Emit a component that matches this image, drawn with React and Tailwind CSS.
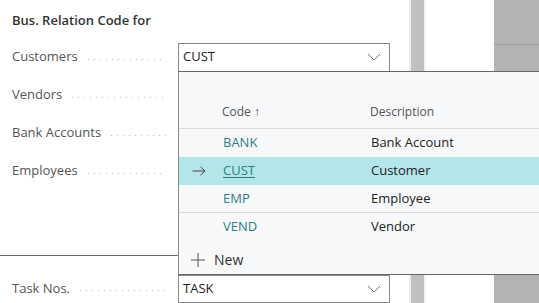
import React from "react";

const font = { fontFamily: '"Segoe UI", "Open Sans", "Noto Sans", sans-serif' };

function Leader() {
  return (
    <div className="flex-1 ml-[10px] mr-[12px] h-[1px] mt-[4px] bg-[linear-gradient(to_right,#bdbdbd_1.5px,transparent_1.5px)] bg-[length:6px_1px] bg-repeat-x" />
  );
}

function Chevron() {
  return (
    <svg width="14" height="8" viewBox="0 0 14 8" className="mr-[8px]">
      <path d="M1 1 L7 7 L13 1" fill="none" stroke="#7a7a7a" strokeWidth="1" />
    </svg>
  );
}

function Field({ label, value, chevron }) {
  return (
    <div className="flex items-center h-[38px] shrink-0">
      <div className="w-[178px] flex items-center pl-[12px]">
        <span className="text-[13px] text-[#555]">{label}</span>
        <Leader />
      </div>
      {value !== undefined ? (
        <div className="w-[212px] h-[29px] border border-[#8a8a8a] bg-white flex items-center justify-between">
          <span className="pl-[4px] text-[13px] text-[#222]">{value}</span>
          {chevron && <Chevron />}
        </div>
      ) : null}
    </div>
  );
}

export default function App() {
  return (
    <div className="relative w-[539px] h-[303px] overflow-hidden bg-white flex" style={font}>
      <div className="w-[409px] flex flex-col shrink-0">
        <div className="h-[38px] shrink-0 pl-[12px] pt-[11px] text-[13px] font-semibold text-[#333]">Bus. Relation Code for</div>
        <Field label="Customers" value="CUST" chevron />
        <Field label="Vendors" />
        <Field label="Bank Accounts" />
        <Field label="Employees" />
        <div className="h-[66px] shrink-0 border-b border-[#6a6a6a]" />
        <div className="flex items-start pt-[19px] h-[60px] shrink-0">
          <div className="w-[178px] flex items-center pl-[12px] h-[27px]">
            <span className="text-[13px] text-[#555]">Task Nos.</span>
            <Leader />
          </div>
          <div className="w-[212px] h-[28px] border border-[#8a8a8a] bg-white flex items-center justify-between">
            <span className="pl-[4px] text-[13px] text-[#222]">TASK</span>
            <Chevron />
          </div>
        </div>
      </div>
      <div className="w-[2px] bg-[#eeeeee] shrink-0" />
      <div className="w-[13px] bg-[#c0c0c0] shrink-0" />
      <div className="w-[2px] bg-[#f2f2f2] shrink-0" />
      <div className="w-[68px] bg-white shrink-0" />
      <div className="flex-1 bg-[#b3b3b3] flex flex-col">
        <div className="h-[45px] border-b border-[#9a9a9a]" />
      </div>

      <div className="absolute left-[178px] top-[71px] w-[370px] h-[204px] bg-[#f7f8f9] border-t border-b border-[#666] border-l border-l-[#8a8a8a] flex flex-col">
        <div className="h-[57px] shrink-0 flex items-end pb-[7px] text-[12px] text-[#555] border-b border-[#dcdcdc]">
          <div className="w-[43px]" />
          <div className="w-[148px]">Code ↑</div>
          <div>Description</div>
        </div>
        <div className="h-[28px] shrink-0 flex items-center text-[13px]">
          <div className="w-[44px]" />
          <div className="w-[148px] text-[#2a7f80]">BANK</div>
          <div className="text-[#222]">Bank Account</div>
        </div>
        <div className="h-[28px] shrink-0 flex items-center text-[13px] bg-[#b3e6e9]">
          <div className="w-[44px] pl-[13px] flex items-center">
            <svg width="14" height="10" viewBox="0 0 14 10">
              <path d="M0.5 5 H13 M8.5 0.8 L13 5 L8.5 9.2" fill="none" stroke="#444" strokeWidth="1" />
            </svg>
          </div>
          <div className="w-[148px] text-[#2a7f80] underline underline-offset-2">CUST</div>
          <div className="text-[#222]">Customer</div>
        </div>
        <div className="h-[28px] shrink-0 flex items-center text-[13px] border-b border-[#dcdcdc]">
          <div className="w-[44px]" />
          <div className="w-[148px] text-[#2a7f80]">EMP</div>
          <div className="text-[#222]">Employee</div>
        </div>
        <div className="h-[27px] shrink-0 flex items-center text-[13px]">
          <div className="w-[44px]" />
          <div className="w-[148px] text-[#2a7f80]">VEND</div>
          <div className="text-[#222]">Vendor</div>
        </div>
        <div className="flex-1 flex items-end pb-[4px] pl-[11px]">
          <div className="flex items-center">
            <svg width="16" height="16" viewBox="0 0 16 16">
              <path d="M8 1 V15 M1 8 H15" stroke="#555" strokeWidth="1" />
            </svg>
            <span className="ml-[8px] text-[14px] text-[#333]">New</span>
          </div>
        </div>
      </div>
    </div>
  );
}
